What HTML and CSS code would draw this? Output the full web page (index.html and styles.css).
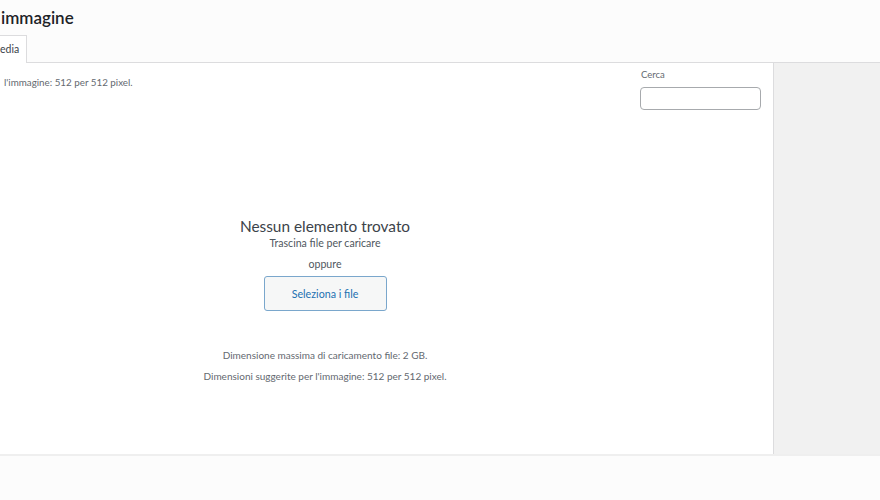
FILE: index.html
```html
<!DOCTYPE html>
<html lang="it">
<head>
<meta charset="utf-8">
<title>Media</title>
<link rel="stylesheet" href="styles.css">
</head>
<body>
<div class="frame">
  <header class="frame-header">
    <h1 class="frame-title">immagine</h1>
    <nav class="tabs">
      <span class="tab active">edia</span>
    </nav>
  </header>
  <main class="frame-main">
    <section class="content">
      <div class="toolbar">
        <p class="size-note">l'immagine: 512 per 512 pixel.</p>
        <div class="search">
          <label class="search-label" for="s">Cerca</label>
          <input class="search-input" id="s" type="search">
        </div>
      </div>
      <div class="uploader">
        <h2 class="upload-title">Nessun elemento trovato</h2>
        <p class="upload-drop">Trascina file per caricare</p>
        <p class="upload-or">oppure</p>
        <button class="upload-button" type="button">Seleziona i file</button>
        <p class="upload-info first">Dimensione massima di caricamento file: 2 GB.</p>
        <p class="upload-info">Dimensioni suggerite per l'immagine: 512 per 512 pixel.</p>
      </div>
    </section>
    <aside class="sidebar"></aside>
  </main>
  <footer class="frame-footer"></footer>
</div>
</body>
</html>
```
FILE: styles.css
```css
* { box-sizing: border-box; }
html, body { margin: 0; padding: 0; }
body {
  font-family: Lato, "Noto Sans", sans-serif;
  color: #3c434a;
  background: #fcfcfc;
  width: 880px;
  height: 500px;
  overflow: hidden;
}
.frame { display: flex; flex-direction: column; height: 500px; }

.frame-header {
  height: 63px;
  background: #fcfcfc;
  border-bottom: 1px solid #dcdcde;
  display: flex;
  flex-direction: column;
  justify-content: space-between;
}
.frame-title {
  margin: 0;
  padding: 7px 0 0 1px;
  font-size: 17px;
  line-height: 22px;
  font-weight: 600;
  color: #1d2327;
}
.tabs { display: flex; margin-bottom: -1px; }
.tab {
  display: block;
  height: 28px;
  width: 27px;
  padding: 0;
  font-size: 10.5px;
  line-height: 27px;
  color: #3c434a;
  background: #fff;
  border-top: 1px solid #dcdcde;
  border-right: 1px solid #dcdcde;
}

.frame-main { display: flex; height: 391px; }
.content { flex: 1; background: #fff; display: flex; flex-direction: column; }
.sidebar { width: 107px; background: #f1f1f1; border-left: 1px solid #dcdcde; }

.toolbar { display: flex; justify-content: space-between; align-items: flex-start; }
.size-note {
  margin: 11px 0 0 4px;
  font-size: 9.8px;
  line-height: 16px;
  color: #646970;
}
.search { display: flex; flex-direction: column; margin: 5px 12px 0 0; }
.search-label {
  padding-left: 1px;
  font-size: 9.5px;
  line-height: 14px;
  color: #646970;
}
.search-input {
  margin: 5px 0 0;
  width: 121px;
  height: 23px;
  border: 1px solid #a7aaad;
  border-radius: 4px;
  background: #fff;
  padding: 0 6px;
  font: inherit;
}

.uploader {
  padding-right: 123px;
  text-align: center;
  display: flex;
  flex-direction: column;
  align-items: center;
}
.upload-title {
  margin: 106px 0 0;
  font-size: 15.4px;
  line-height: 20px;
  font-weight: 400;
  color: #3c434a;
}
.upload-drop, .upload-or {
  margin: 0;
  font-size: 10.6px;
  line-height: 14px;
  color: #50575e;
}
.upload-or { margin-top: 7px; }
.upload-button {
  margin-top: 5px;
  width: 123px;
  height: 35px;
  background: #f6f7f7;
  border: 1px solid #7aa7cc;
  border-radius: 3px;
  color: #2271b1;
  font: inherit;
  font-size: 10.7px;
  padding: 0;
}
.upload-info {
  margin: 5px 0 0;
  font-size: 10px;
  line-height: 16px;
  color: #646970;
}
.upload-info.first { margin-top: 36px; }

.frame-footer {
  flex: 1;
  background: #fcfcfc;
  border-top: 2px solid #efefef;
}
```
